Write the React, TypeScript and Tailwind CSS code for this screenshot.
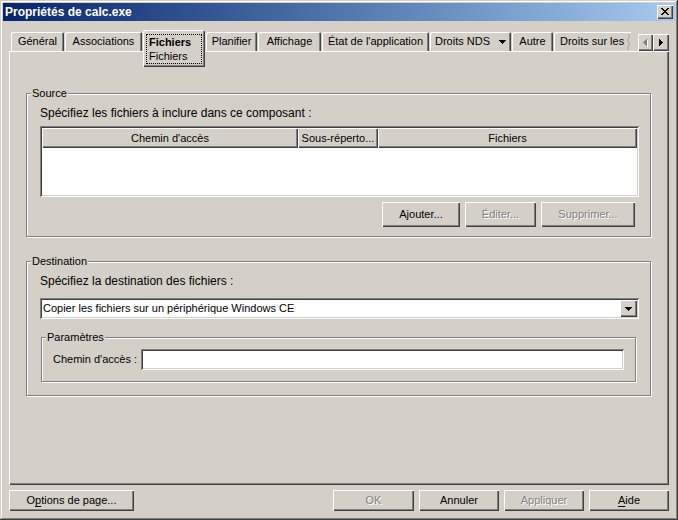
import React from "react";

const raised =
  "shadow-[inset_1px_1px_0_#fff,inset_-1px_-1px_0_#404040,inset_-2px_-2px_0_#808080]";
const sunken =
  "shadow-[inset_1px_1px_0_#808080,inset_-1px_-1px_0_#fff,inset_2px_2px_0_#404040,inset_-2px_-2px_0_#d4d0c8]";
const etched = "border border-[#808080] shadow-[inset_1px_1px_0_#fff,1px_1px_0_#fff]";
const disabledText = "text-[#808080] [text-shadow:1px_1px_0_#fff]";

function Btn({
  className,
  disabled,
  children,
}: {
  className: string;
  disabled?: boolean;
  children: React.ReactNode;
}) {
  return (
    <div
      className={`${className} bg-[#d4d0c8] ${raised} flex items-center justify-center leading-[13px] whitespace-nowrap ${
        disabled ? disabledText : "text-black"
      }`}
    >
      {children}
    </div>
  );
}

function Tab({ className, children }: { className: string; children: React.ReactNode }) {
  return (
    <div
      className={`${className} h-[19px] shrink-0 bg-[#d4d0c8] rounded-t-[2px] shadow-[inset_1px_1px_0_#fff,inset_-1px_0_0_#404040,inset_-2px_0_0_#808080] flex items-center justify-center leading-[13px] whitespace-nowrap`}
    >
      {children}
    </div>
  );
}

function DownTri({ className }: { className?: string }) {
  return (
    <svg width="7" height="4" viewBox="0 0 7 4" shapeRendering="crispEdges" className={className}>
      <rect x="0" y="0" width="7" height="1" fill="#000" />
      <rect x="1" y="1" width="5" height="1" fill="#000" />
      <rect x="2" y="2" width="3" height="1" fill="#000" />
      <rect x="3" y="3" width="1" height="1" fill="#000" />
    </svg>
  );
}

function HorizTri({ dir, color, shadow }: { dir: "left" | "right"; color: string; shadow?: boolean }) {
  const cols =
    dir === "left"
      ? [
          [3, 1],
          [2, 3],
          [1, 5],
          [0, 7],
        ]
      : [
          [0, 7],
          [1, 5],
          [2, 3],
          [3, 1],
        ];
  return (
    <svg width="5" height="8" viewBox="0 0 5 8" shapeRendering="crispEdges">
      {shadow &&
        cols.map(([y, h], i) => <rect key={"s" + i} x={i + 1} y={y + 1} width="1" height={h} fill="#fff" />)}
      {cols.map(([y, h], i) => (
        <rect key={i} x={i} y={y} width="1" height={h} fill={color} />
      ))}
    </svg>
  );
}

function CloseGlyph() {
  const r: [number, number, number][] = [
    [0, 0, 2],
    [6, 0, 2],
    [1, 1, 2],
    [5, 1, 2],
    [2, 2, 4],
    [3, 3, 2],
    [2, 4, 4],
    [1, 5, 2],
    [5, 5, 2],
    [0, 6, 2],
    [6, 6, 2],
  ];
  return (
    <svg width="8" height="7" viewBox="0 0 8 7" shapeRendering="crispEdges">
      {r.map(([x, y, w], i) => (
        <rect key={i} x={x} y={y} width={w} height="1" fill="#000" />
      ))}
    </svg>
  );
}

export default function App() {
  return (
    <div className="w-[678px] h-[520px] bg-[#d4d0c8] p-[3px] shadow-[inset_-1px_-1px_0_#404040,inset_1px_1px_0_#d4d0c8,inset_-2px_-2px_0_#808080,inset_2px_2px_0_#fff] font-['Liberation_Sans',Arial,sans-serif] text-[11px] text-black flex flex-col overflow-hidden">
      {/* Title bar */}
      <div className="h-[18px] shrink-0 flex items-center bg-linear-to-r from-[#0a246a] to-[#a6caf0] pl-[2px] pr-[2px]">
        <span className="flex-1 text-white font-bold text-[12px] leading-[14px] whitespace-nowrap">
          Propriétés de calc.exe
        </span>
        <div className={`w-[16px] h-[14px] bg-[#d4d0c8] ${raised} flex items-center justify-center pb-px`}>
          <CloseGlyph />
        </div>
      </div>

      {/* Tabs + panel */}
      <div className="mt-[9px] px-[6px] flex flex-col">
        <div className="h-[21px] flex items-end gap-px pl-[2px]">
          <Tab className="w-[53px]">Général</Tab>
          <Tab className="w-[77px]">Associations</Tab>
          <div
            className={`relative z-10 w-[62px] h-[37px] mb-[-16px] shrink-0 bg-[#d4d0c8] rounded-t-[2px] ${raised} pt-[4px] px-[3px]`}
          >
            <div className="h-[30px] border border-dotted border-black pl-[2px] flex flex-col leading-[14px] whitespace-nowrap">
              <span className="font-bold">Fichiers</span>
              <span>Fichiers</span>
            </div>
          </div>
          <Tab className="w-[51px]">Planifier</Tab>
          <Tab className="w-[63px]">Affichage</Tab>
          <Tab className="w-[107px]">État de l'application</Tab>
          <Tab className="w-[81px]">
            <span>Droits NDS</span>
            <DownTri className="ml-[9px]" />
          </Tab>
          <Tab className="w-[41px]">Autre</Tab>
          <div className="w-[77px] h-[19px] shrink-0 bg-[#d4d0c8] rounded-tl-[2px] shadow-[inset_1px_1px_0_#fff] flex items-center pl-[6px] leading-[13px] whitespace-nowrap overflow-hidden">
            <span>Droits sur les</span>
            <svg width="5" height="19" viewBox="0 0 5 19" className="ml-[2px] shrink-0">
              <path
                d="M2.5 2 Q4.5 4 2.5 6 Q0.5 8 2.5 10 Q4.5 12 2.5 14 Q0.5 16 2.5 18"
                fill="none"
                stroke="#a0a0a0"
                strokeWidth="1"
              />
            </svg>
          </div>
          <div className="ml-auto flex h-[17px] shrink-0">
            <div className={`w-[15px] h-full bg-[#d4d0c8] ${raised} flex items-center justify-center`}>
              <HorizTri dir="left" color="#808080" shadow />
            </div>
            <div className={`w-[16px] h-full bg-[#d4d0c8] ${raised} flex items-center justify-center pl-px`}>
              <HorizTri dir="right" color="#000" />
            </div>
          </div>
        </div>

        <div className={`h-[434px] ${raised} pt-[42px] pl-[17px] pr-[18px] flex flex-col`}>
          {/* Source */}
          <div className={`relative h-[144px] ${etched} pt-[12px] pl-[13px] pr-[11px] flex flex-col`}>
            <span className="absolute top-[-7px] left-[4px] px-[1px] bg-[#d4d0c8] leading-[13px]">Source</span>
            <div className="text-[12px] leading-[14px] whitespace-nowrap">
              Spécifiez les fichiers à inclure dans ce composant :
            </div>
            <div className={`mt-[6px] h-[71px] bg-white p-[2px] ${sunken}`}>
              <div className="h-[20px] flex">
                <div className={`w-[256px] h-full bg-[#d4d0c8] ${raised} flex items-center justify-center leading-[13px]`}>
                  Chemin d'accès
                </div>
                <div className={`w-[80px] h-full bg-[#d4d0c8] ${raised} flex items-center justify-center leading-[13px] whitespace-nowrap overflow-hidden`}>
                  Sous-réperto...
                </div>
                <div className={`flex-1 h-full bg-[#d4d0c8] ${raised} flex items-center justify-center leading-[13px]`}>
                  Fichiers
                </div>
              </div>
            </div>
            <div className="mt-[5px] flex justify-end gap-[5px] pr-[4px]">
              <Btn className="w-[78px] h-[25px]">Ajouter...</Btn>
              <Btn className="w-[71px] h-[25px]" disabled>
                Éditer...
              </Btn>
              <Btn className="w-[94px] h-[25px]" disabled>
                Supprimer...
              </Btn>
            </div>
          </div>

          {/* Destination */}
          <div className={`relative mt-[24px] h-[135px] ${etched} pt-[12px] pl-[13px] pr-[11px] flex flex-col`}>
            <span className="absolute top-[-7px] left-[4px] px-[1px] bg-[#d4d0c8] leading-[13px]">Destination</span>
            <div className="text-[12px] leading-[14px] whitespace-nowrap">
              Spécifiez la destination des fichiers :
            </div>
            <div className={`mt-[10px] h-[21px] bg-white p-[2px] ${sunken} flex`}>
              <div className="flex-1 flex items-center pl-[1px] leading-[13px] whitespace-nowrap">
                Copier les fichiers sur un périphérique Windows CE
              </div>
              <div className={`w-[17px] h-full bg-[#d4d0c8] ${raised} flex items-center justify-center`}>
                <DownTri />
              </div>
            </div>
            <div className={`relative mt-[18px] ml-[1px] w-[595px] h-[45px] ${etched} flex items-center pl-[11px] pr-[11px]`}>
              <span className="absolute top-[-7px] left-[4px] px-[1px] bg-[#d4d0c8] leading-[13px]">Paramètres</span>
              <div className="w-[88px] shrink-0 leading-[13px] whitespace-nowrap">Chemin d'accès :</div>
              <div className={`flex-1 h-[21px] bg-white ${sunken}`} />
            </div>
          </div>
        </div>
      </div>

      {/* Bottom buttons */}
      <div className="mt-[5px] px-[6px] flex">
        <Btn className="w-[125px] h-[21px]">
          <span>
            O<span className="underline underline-offset-2">p</span>tions de page...
          </span>
        </Btn>
        <div className="ml-auto flex gap-[5px]">
          <Btn className="w-[81px] h-[21px]" disabled>
            OK
          </Btn>
          <Btn className="w-[80px] h-[21px]">Annuler</Btn>
          <Btn className="w-[80px] h-[21px]" disabled>
            Appliquer
          </Btn>
          <Btn className="w-[80px] h-[21px]">
            <span>
              <span className="underline underline-offset-2">A</span>ide
            </span>
          </Btn>
        </div>
      </div>
    </div>
  );
}
